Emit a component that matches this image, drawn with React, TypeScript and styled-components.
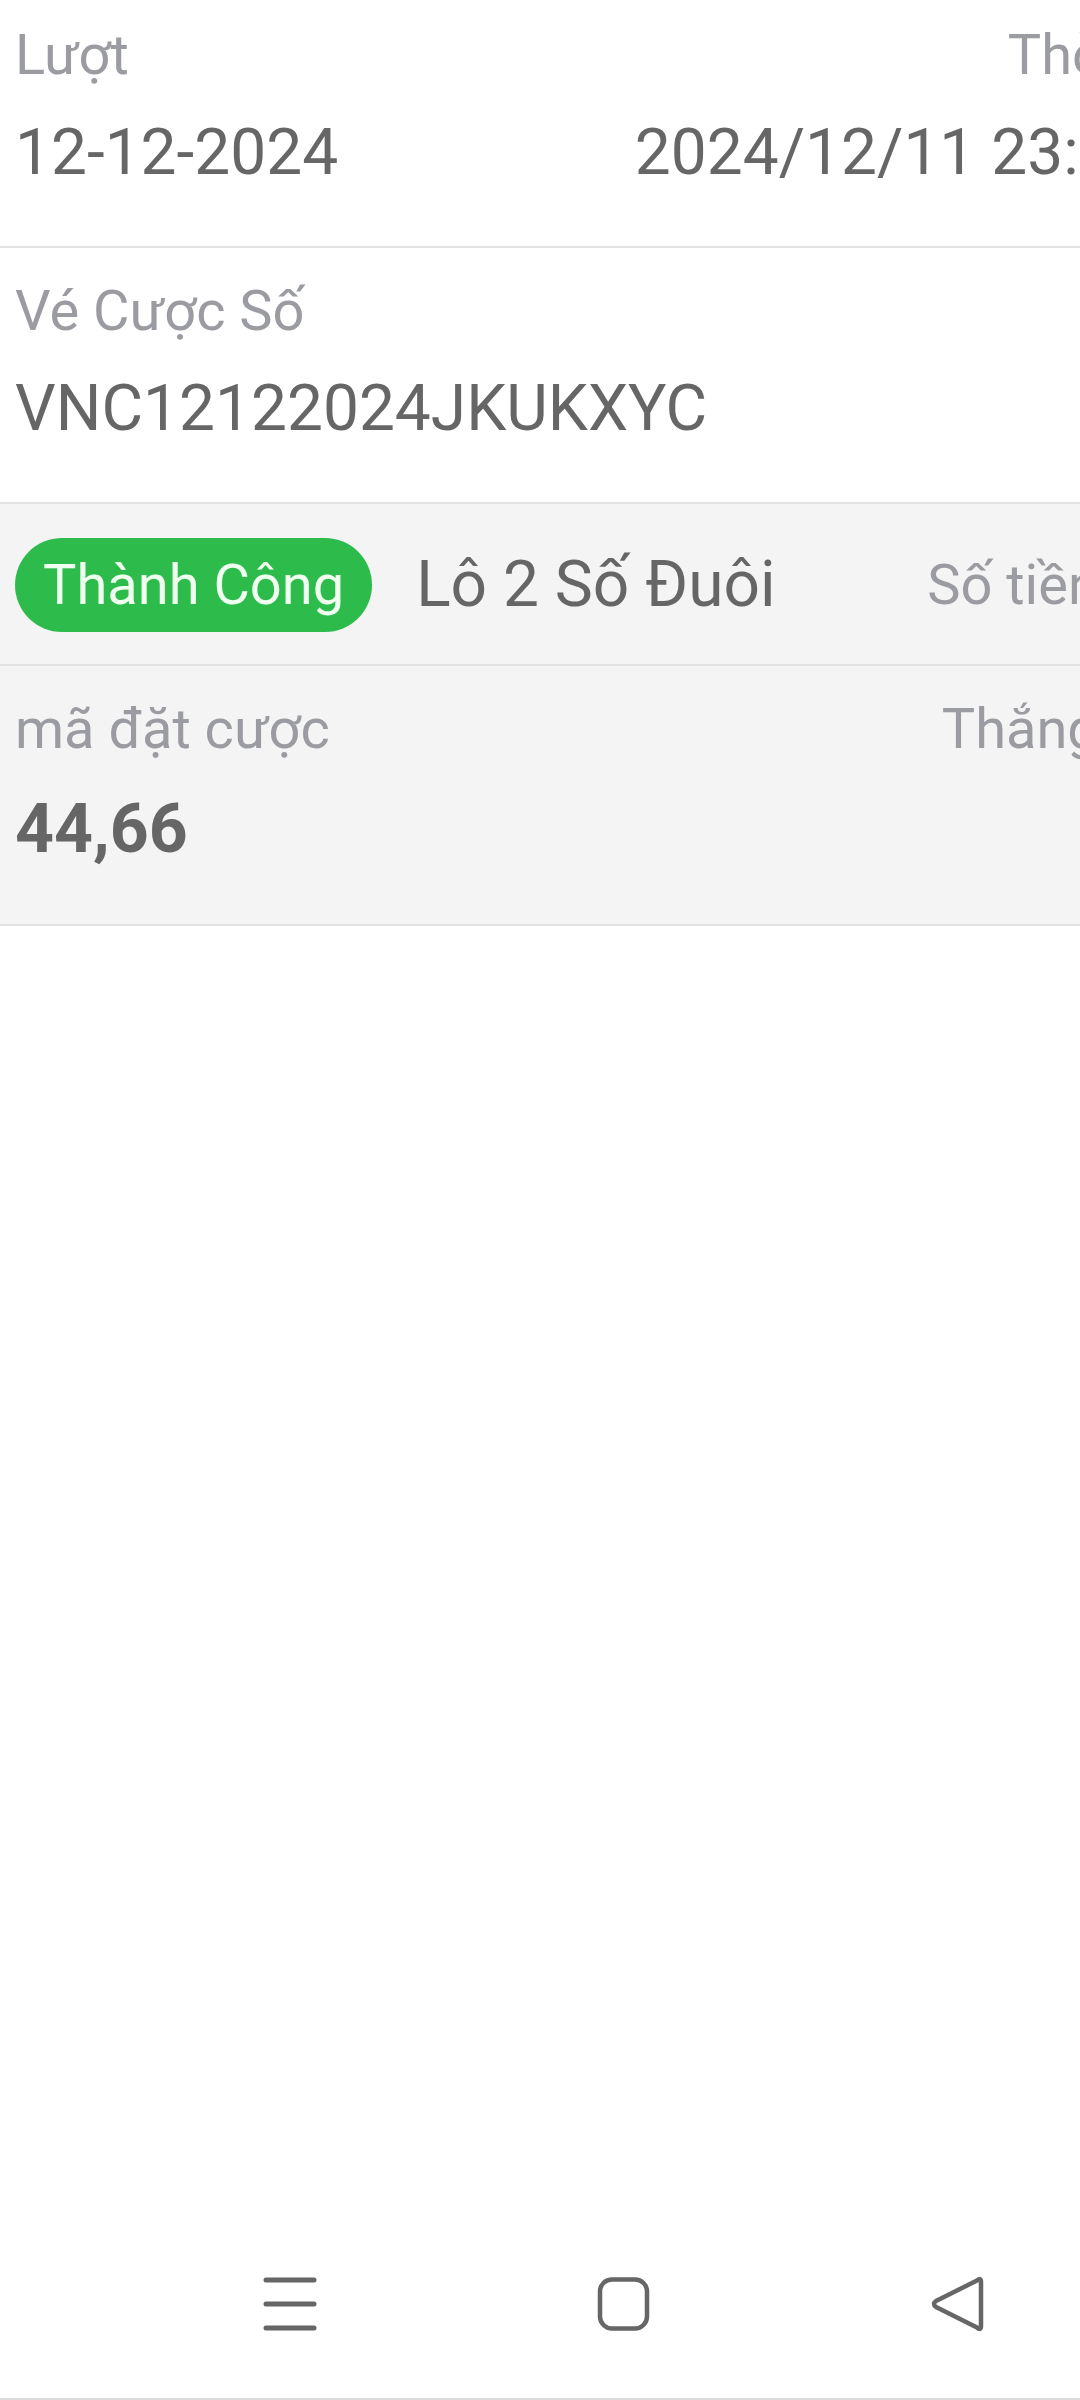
import React from "react";
import styled, { createGlobalStyle } from "styled-components";

const Global = createGlobalStyle`
  *, *::before, *::after { box-sizing: border-box; }
  html, body {
    margin: 0;
    padding: 0;
    background: #ffffff;
    overflow: hidden;
  }
  body {
    font-family: Roboto, "Noto Sans", "Liberation Sans", sans-serif;
  }
`;

const Page = styled.div`
  width: 1256px;
  height: 2400px;
  display: flex;
  flex-direction: column;
  background: #ffffff;
`;

const List = styled.div`
  display: flex;
  flex-direction: column;
  margin-top: -8px;
  flex: 1;
`;

const Row = styled.div<{ $gray?: boolean }>`
  display: flex;
  justify-content: space-between;
  align-items: flex-start;
  padding: 32px 18px 56px 15px;
  background: ${(p) => (p.$gray ? "#f4f4f4" : "#ffffff")};
  border-bottom: 2px solid #e2e2e2;
`;

const StatusRow = styled.div`
  display: flex;
  align-items: center;
  padding: 34px 18px 32px 15px;
  background: #f4f4f4;
  border-bottom: 2px solid #e2e2e2;
`;

const Col = styled.div<{ $right?: boolean }>`
  display: flex;
  flex-direction: column;
  gap: 30px;
  align-items: ${(p) => (p.$right ? "flex-end" : "flex-start")};
  text-align: ${(p) => (p.$right ? "right" : "left")};
`;

const Label = styled.div`
  font-size: 56px;
  line-height: 62px;
  color: #9b9ca2;
  white-space: nowrap;
`;

const Value = styled.div<{ $bold?: boolean }>`
  font-size: ${(p) => (p.$bold ? "68px" : "64px")};
  line-height: ${(p) => (p.$bold ? "78px" : "74px")};
  font-weight: ${(p) => (p.$bold ? 700 : 400)};
  color: #666666;
  white-space: nowrap;
  min-height: 74px;
`;

const Pill = styled.div`
  height: 94px;
  padding: 0 28px;
  border-radius: 47px;
  background: #2dbb4c;
  color: #effff0;
  font-size: 56px;
  line-height: 94px;
  white-space: nowrap;
`;

const BetType = styled.div`
  margin-left: 44px;
  font-size: 64px;
  line-height: 74px;
  color: #666666;
  white-space: nowrap;
`;

const StatusLabel = styled(Label)`
  margin-left: auto;
`;

const NavBar = styled.div`
  width: 1248px;
  height: 204px;
  display: flex;
  justify-content: center;
  align-items: center;
  gap: 280px;
  border-bottom: 2px solid #dcdcdc;
  padding-top: 14px;
`;

const NavIcon = styled.svg`
  width: 54px;
  height: 54px;
  display: block;
`;

export default function App() {
  return (
    <Page>
      <Global />
      <List>
        <Row>
          <Col>
            <Label>Lượt</Label>
            <Value>12-12-2024</Value>
          </Col>
          <Col $right>
            <Label>Thời gian</Label>
            <Value>2024/12/11 23:56:18</Value>
          </Col>
        </Row>
        <Row>
          <Col>
            <Label>Vé Cược Số</Label>
            <Value>VNC12122024JKUKXYC</Value>
          </Col>
        </Row>
        <StatusRow>
          <Pill>Thành Công</Pill>
          <BetType>Lô 2 Số Đuôi</BetType>
          <StatusLabel>Số tiền cược</StatusLabel>
        </StatusRow>
        <Row $gray>
          <Col>
            <Label>mã đặt cược</Label>
            <Value $bold>44,66</Value>
          </Col>
          <Col $right>
            <Label>Thắng cược</Label>
            <Value></Value>
          </Col>
        </Row>
      </List>
      <NavBar>
        <NavIcon viewBox="0 0 54 54">
          <g stroke="#666666" strokeWidth="5" strokeLinecap="round">
            <line x1="3" y1="3" x2="51" y2="3" />
            <line x1="3" y1="27" x2="51" y2="27" />
            <line x1="3" y1="51" x2="51" y2="51" />
          </g>
        </NavIcon>
        <NavIcon viewBox="0 0 54 54">
          <rect x="3" y="2.5" width="47" height="49" rx="12" ry="12" fill="none" stroke="#666666" strokeWidth="4.5" />
        </NavIcon>
        <NavIcon viewBox="0 0 54 54">
          <path d="M50 5 Q50 0 46 3.5 L5 24 Q1 27 5 30 L46 50.5 Q50 54 50 49 Z" fill="none" stroke="#666666" strokeWidth="4.5" strokeLinejoin="round" />
        </NavIcon>
      </NavBar>
    </Page>
  );
}
